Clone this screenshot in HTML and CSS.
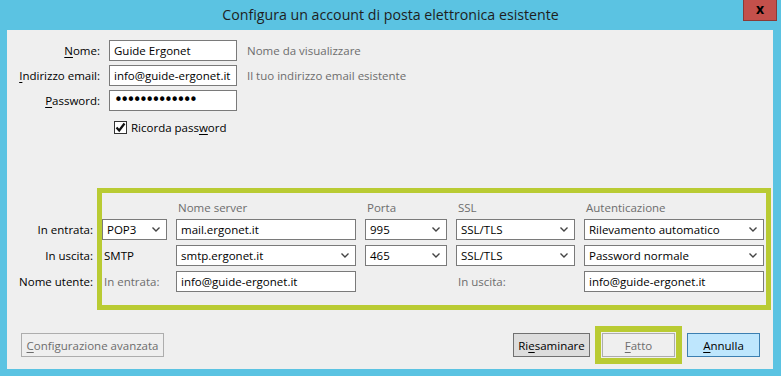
FILE: index.html
```html
<!DOCTYPE html>
<html lang="it">
<head>
  <meta charset="UTF-8" />
  <title>Configura un account di posta elettronica esistente</title>
  <link rel="stylesheet" href="styles.css">
</head>
<body>
  <div class="titlebar">
    <span class="title">Configura un account di posta elettronica esistente</span>
    <div class="close">x</div>
  </div>

  <div class="panel">
    <div class="identity">
      <span class="lbl"><u>N</u>ome:</span>
      <div class="field">Guide Ergonet</div>
      <span class="hint">Nome da visualizzare</span>

      <span class="lbl"><u>I</u>ndirizzo email:</span>
      <div class="field">info@guide-ergonet.it</div>
      <span class="hint">Il tuo indirizzo email esistente</span>

      <span class="lbl"><u>P</u>assword:</span>
      <div class="field"><span class="dots">•••••••••••••</span></div>
      <span></span>
    </div>

    <div class="remember">
      <span class="check">
        <svg width="11" height="11" viewBox="0 0 11 11"><path d="M1.5 5.5 L4.2 8.5 L9.5 1.5" fill="none" stroke="#111" stroke-width="2.2"/></svg>
      </span>
      <span>Ricorda pass<u>w</u>ord</span>
    </div>

    <div class="servers">
      <div class="highlight"></div>

      <span></span>
      <span></span>
      <span class="colhead">Nome server</span>
      <span class="colhead">Porta</span>
      <span class="colhead">SSL</span>
      <span class="colhead">Autenticazione</span>

      <span class="lbl">In entrata:</span>
      <div class="field select">POP3 <svg class="chev" width="8" height="5" viewBox="0 0 8 5"><path d="M0.5 0.5 L4 4 L7.5 0.5" fill="none" stroke="#444" stroke-width="1.4"/></svg></div>
      <div class="field">mail.ergonet.it</div>
      <div class="field select">995 <svg class="chev" width="8" height="5" viewBox="0 0 8 5"><path d="M0.5 0.5 L4 4 L7.5 0.5" fill="none" stroke="#444" stroke-width="1.4"/></svg></div>
      <div class="field select">SSL/TLS <svg class="chev" width="8" height="5" viewBox="0 0 8 5"><path d="M0.5 0.5 L4 4 L7.5 0.5" fill="none" stroke="#444" stroke-width="1.4"/></svg></div>
      <div class="field select">Rilevamento automatico <svg class="chev" width="8" height="5" viewBox="0 0 8 5"><path d="M0.5 0.5 L4 4 L7.5 0.5" fill="none" stroke="#444" stroke-width="1.4"/></svg></div>

      <span class="lbl">In uscita:</span>
      <span class="plain">SMTP</span>
      <div class="field select">smtp.ergonet.it <svg class="chev" width="8" height="5" viewBox="0 0 8 5"><path d="M0.5 0.5 L4 4 L7.5 0.5" fill="none" stroke="#444" stroke-width="1.4"/></svg></div>
      <div class="field select">465 <svg class="chev" width="8" height="5" viewBox="0 0 8 5"><path d="M0.5 0.5 L4 4 L7.5 0.5" fill="none" stroke="#444" stroke-width="1.4"/></svg></div>
      <div class="field select">SSL/TLS <svg class="chev" width="8" height="5" viewBox="0 0 8 5"><path d="M0.5 0.5 L4 4 L7.5 0.5" fill="none" stroke="#444" stroke-width="1.4"/></svg></div>
      <div class="field select">Password normale <svg class="chev" width="8" height="5" viewBox="0 0 8 5"><path d="M0.5 0.5 L4 4 L7.5 0.5" fill="none" stroke="#444" stroke-width="1.4"/></svg></div>

      <span class="lbl">Nome utente:</span>
      <span class="sub">In entrata:</span>
      <div class="field">info@guide-ergonet.it</div>
      <span></span>
      <span class="sub">In uscita:</span>
      <div class="field">info@guide-ergonet.it</div>
    </div>

    <div class="actions">
      <div class="btn disabled advanced"><u>C</u>onfigurazione avanzata</div>
      <div class="spacer"></div>
      <div class="btn retest">Ri<u>e</u>saminare</div>
      <div class="btn disabled done"><u>F</u>atto</div>
      <div class="btn cancel"><u>A</u>nnulla</div>
    </div>
  </div>
</body>
</html>
```

FILE: styles.css
```css
body {
  margin: 0;
  width: 781px;
  height: 376px;
  background: #5bc3e2;
  font-family: 'Open Sans', 'Noto Sans', sans-serif;
  font-size: 11.5px;
  color: #000;
  overflow: hidden;
}

u { text-decoration: underline; text-underline-offset: 2px; }

.titlebar {
  height: 30px;
  display: grid;
  grid-template-columns: 1fr auto 1fr;
}

.title {
  grid-column: 2;
  font-size: 14.2px;
  color: #1e1e1e;
  line-height: 30px;
}

.close {
  grid-column: 3;
  justify-self: end;
  width: 32px;
  height: 20px;
  margin-right: 4px;
  background: #c4504b;
  border: 1px solid #8b3a36;
  border-top: none;
  text-align: center;
  font-weight: 700;
  font-size: 14px;
  line-height: 17px;
  color: #000;
}

.panel {
  background: #efefef;
  margin: 0 8px 0 7px;
  height: 339px;
  display: flex;
  flex-direction: column;
}

/* top: name, email, password */
.identity {
  display: grid;
  grid-template-columns: 93px 128px 1fr;
  grid-auto-rows: 21px;
  column-gap: 9px;
  row-gap: 4px;
  padding-top: 10px;
  align-items: center;
}

.lbl { text-align: right; white-space: nowrap; }
.hint { color: #6d6d6d; padding-left: 1px; white-space: nowrap; }

.field {
  box-sizing: border-box;
  height: 21px;
  background: #fff;
  border: 1px solid #7a7a7a;
  padding: 0 6px 0 4px;
  display: flex;
  align-items: center;
  white-space: nowrap;
  overflow: hidden;
}

.select { justify-content: space-between; }
.chev { flex: none; }

.dots {
  font-family: 'DejaVu Sans', sans-serif;
  font-size: 15px;
  line-height: 15px;
  letter-spacing: -2.6px;
}

.remember {
  display: flex;
  align-items: center;
  gap: 4px;
  margin: 9px 0 0 107px;
  height: 14px;
}

.check {
  box-sizing: border-box;
  width: 13px;
  height: 13px;
  background: #fff;
  border: 1px solid #333;
  display: flex;
  align-items: center;
  justify-content: center;
}

/* server settings */
.servers {
  position: relative;
  margin-top: 66px;
  display: grid;
  grid-template-columns: 86px 65px 180px 82px 119px 180px;
  grid-template-rows: 14px 21px 21px 21px;
  column-gap: 9px;
  row-gap: 5px;
  align-items: center;
}

.colhead { color: #6d6d6d; padding-left: 2px; }
.plain { padding-left: 2px; }
.sub { color: #6d6d6d; padding-left: 2px; }

.highlight {
  position: absolute;
  left: 90px;
  top: -12px;
  width: 674px;
  height: 122px;
  box-sizing: border-box;
  border: 5px solid #b9cb33;
  pointer-events: none;
}

/* bottom buttons */
.actions {
  margin-top: auto;
  display: flex;
  align-items: center;
  padding: 0 13px 12px 14px;
}

.spacer { flex: 1; }

.btn {
  box-sizing: border-box;
  height: 24px;
  display: flex;
  align-items: center;
  justify-content: center;
  border: 1px solid #707070;
  background: #dddddd;
  white-space: nowrap;
}

.btn.disabled { color: #6d6d6d; border-color: #adadad; background: #efefef; }
.advanced { width: 143px; }
.retest { width: 77px; }
.done {
  width: 73px;
  margin: 0 12px;
  background: #f3f3f3;
  outline: 6px solid #b9cb33;
  outline-offset: 1px;
}
.cancel { width: 73px; background: #bee6fd; border-color: #3c7fb1; }
```
